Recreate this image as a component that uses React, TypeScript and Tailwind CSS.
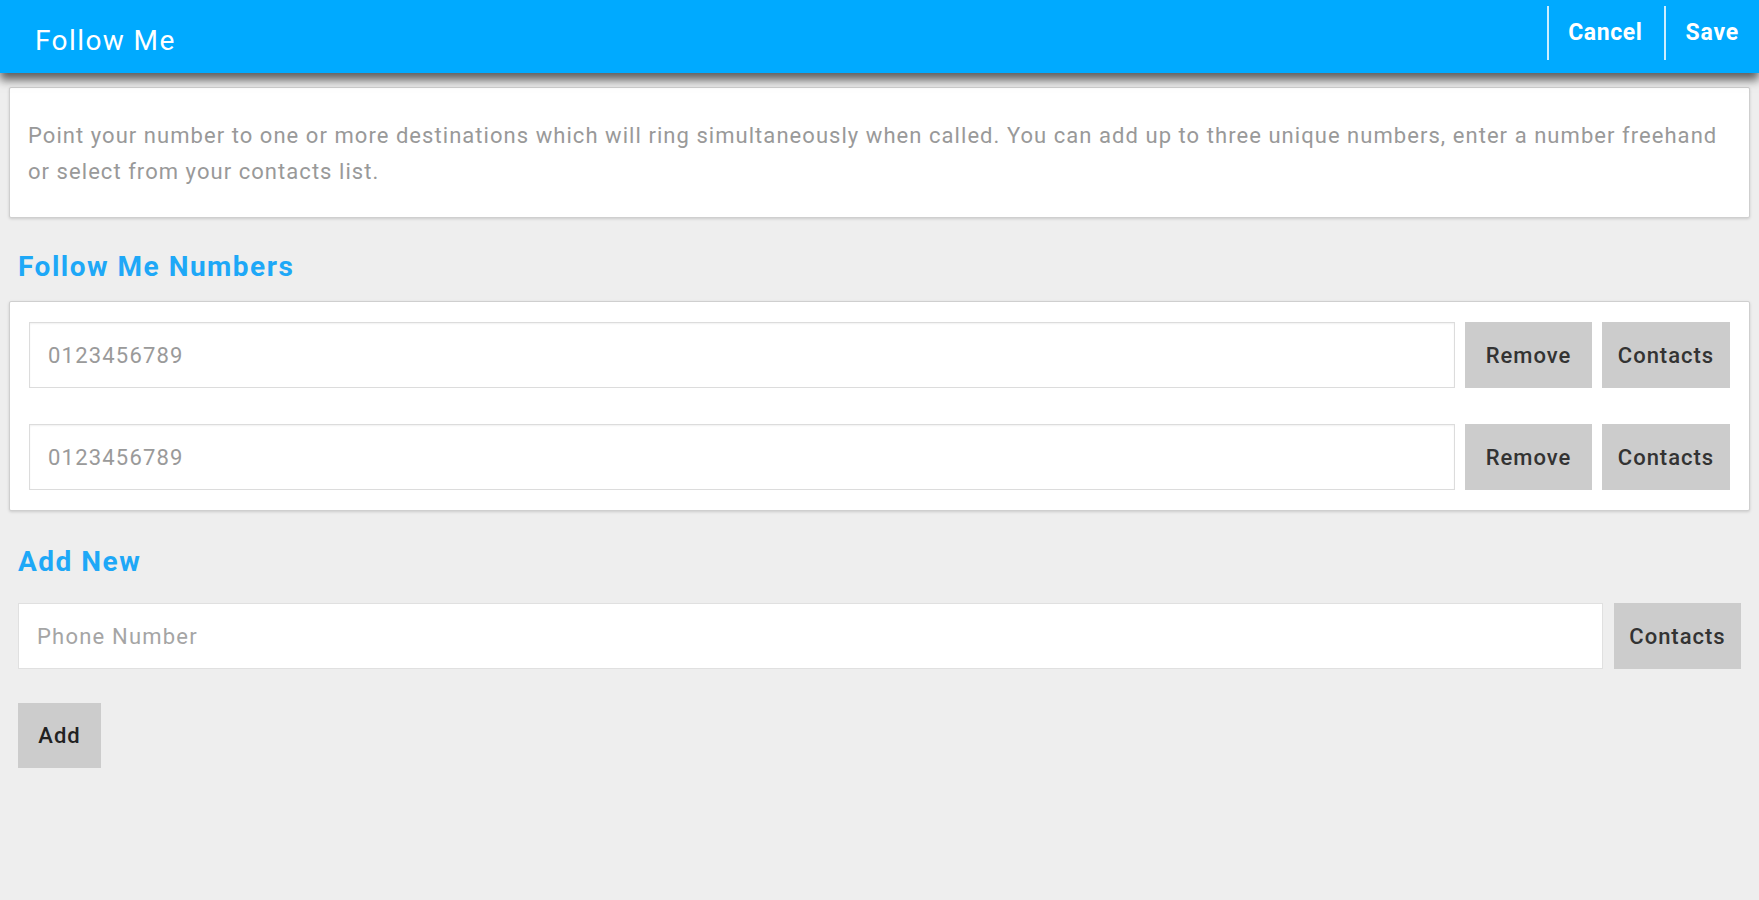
import React from "react";

const font = { fontFamily: "Roboto, 'Noto Sans', sans-serif" };

function NumberRow({ value }: { value: string }) {
  return (
    <div className="flex h-[66px] gap-[10px]">
      <div className="flex flex-1 items-center border border-[#dcdcdc] bg-white pl-[18px] text-[22px] tracking-[1.2px] text-[#9a9a9a] shadow-[inset_0_1px_2px_rgba(0,0,0,0.06)]">
        {value}
      </div>
      <button className="w-[127px] bg-[#cccccc] text-[22px] font-medium tracking-[1px] text-[#333333]">Remove</button>
      <button className="w-[128px] bg-[#cccccc] text-[22px] font-medium tracking-[1px] text-[#333333]">Contacts</button>
    </div>
  );
}

export default function App() {
  return (
    <div className="min-h-[900px] w-full bg-[#eeeeee]" style={font}>
      <header className="relative z-10 flex h-[73px] bg-[#00aaff] shadow-[0_7px_9px_rgba(0,0,0,0.6)]">
        <div className="flex flex-1 items-center pl-[35px] pt-[9px] text-[28px] tracking-[1.4px] text-white">Follow Me</div>
        <div className="flex h-[66px] items-center">
          <div className="h-[54px] w-[2px] self-center bg-white/80" />
          <button className="pl-[19px] pr-[21px] text-[23px] font-bold tracking-[0.6px] text-white">Cancel</button>
          <div className="h-[54px] w-[2px] self-center bg-white/80" />
          <button className="pl-[20px] pr-[20px] text-[23px] font-bold tracking-[0.8px] text-white">Save</button>
        </div>
      </header>

      <div className="px-[9px] pt-[14px]">
        <div className="rounded-[2px] border border-[#cfcfcf] bg-white px-[18px] pb-[27px] pt-[30px] text-[22px] leading-[36px] tracking-[1.05px] text-[#999999] shadow-[0_1px_3px_rgba(0,0,0,0.15)]">
          Point your number to one or more destinations which will ring simultaneously when called. You can add up to three unique numbers, enter a number freehand
          <br />
          or select from your contacts list.
        </div>
      </div>

      <h2 className="mt-[33px] pl-[18px] text-[28px] font-bold leading-[32px] tracking-[1.5px] text-[#1ea8f7]">Follow Me Numbers</h2>

      <div className="mt-[18px] px-[9px]">
        <div className="flex flex-col gap-[36px] rounded-[2px] border border-[#cfcfcf] bg-white px-[19px] py-[20px] shadow-[0_1px_3px_rgba(0,0,0,0.15)]">
          <NumberRow value="0123456789" />
          <NumberRow value="0123456789" />
        </div>
      </div>

      <h2 className="mt-[35px] pl-[18px] text-[28px] font-bold leading-[32px] tracking-[1.5px] text-[#1ea8f7]">Add New</h2>

      <div className="mt-[25px] flex h-[66px] gap-[11px] px-[18px]">
        <div className="flex flex-1 items-center border border-[#e0e0e0] bg-white pl-[18px] text-[22px] tracking-[1.2px] text-[#a5a5a5]">
          Phone Number
        </div>
        <button className="w-[127px] bg-[#cccccc] text-[22px] font-medium tracking-[1px] text-[#333333]">Contacts</button>
      </div>

      <div className="mt-[34px] px-[18px]">
        <button className="h-[65px] w-[83px] bg-[#cccccc] text-[22px] font-medium tracking-[1px] text-[#222222]">Add</button>
      </div>
    </div>
  );
}
